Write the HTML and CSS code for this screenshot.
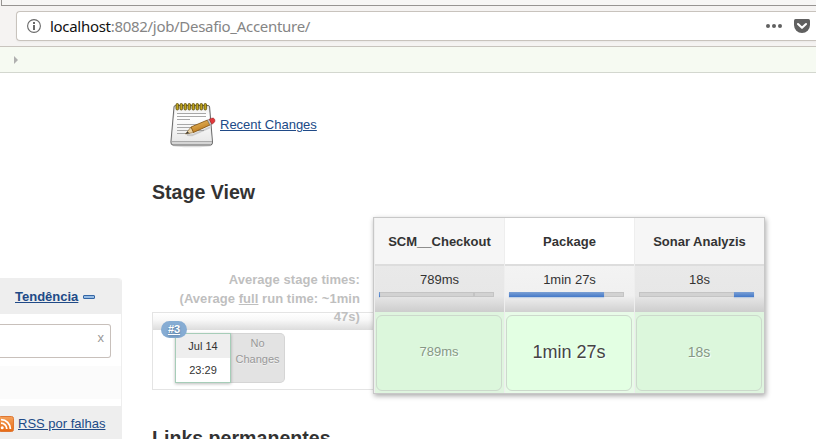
FILE: index.html
```html
<!DOCTYPE html>
<html lang="pt">
<head>
<meta charset="utf-8">
<title>Desafio_Accenture</title>
<link rel="stylesheet" href="styles.css">
</head>
<body>
<header class="toolbar">
  <div class="tab-edge"></div>
  <div class="urlbar">
    <svg class="info" width="14" height="14" viewBox="0 0 14 14"><circle cx="7" cy="7" r="6.4" fill="none" stroke="#686868" stroke-width="1.1"/><path d="M6 3h2v2H6zM6 6h2v5H6z" fill="#686868"/></svg>
    <span class="url"><b>localhost</b>:8082/job/Desafio_Accenture/</span>
    <svg class="dots" width="16" height="4" viewBox="0 0 16 4" fill="#606060"><circle cx="2" cy="2" r="2"/><circle cx="8" cy="2" r="2"/><circle cx="14" cy="2" r="2"/></svg>
    <svg class="pocket" width="16" height="14" viewBox="0 0 16 14"><path d="M1.5 0h13Q16 0 16 1.5V6A8 8 0 0 1 0 6V1.5Q0 0 1.5 0z" fill="#606060"/><path d="M4 5l4 3.8L12 5" fill="none" stroke="#fff" stroke-width="2.1" stroke-linecap="round" stroke-linejoin="round"/></svg>
  </div>
</header>
<nav class="crumbs"><svg width="4" height="8" viewBox="0 0 4 8"><path d="M0 0l4 4-4 4z" fill="#b0b0b0"/></svg></nav>
<div class="page">
  <aside class="history">
    <div class="history-head"><a href="#">Tendência</a><i class="dash"></i></div>
    <div class="find-row"><div class="find">x</div></div>
    <div class="build-row"></div>
    <div class="rss">
      <svg width="16" height="16" viewBox="0 0 16 16"><defs><linearGradient id="rss" x2="0" y2="1"><stop stop-color="#f4a25c"/><stop offset="1" stop-color="#e86a14"/></linearGradient></defs><rect x=".5" y=".5" width="15" height="15" rx="2" fill="url(#rss)" stroke="#df7732"/><circle cx="4.2" cy="11.8" r="1.5" fill="#fff"/><path d="M3 7.2a5.8 5.8 0 0 1 5.8 5.8M3 3.6A9.4 9.4 0 0 1 12.4 13" fill="none" stroke="#fff" stroke-width="1.8"/></svg>
      <a href="#">RSS por falhas</a>
    </div>
  </aside>
  <main>
    <div class="changes">
      <svg width="48" height="48" viewBox="-2 0 48 48">
        <defs>
          <linearGradient id="paper" x2="0" y2="1"><stop stop-color="#eee"/><stop offset=".3" stop-color="#fff"/><stop offset="1" stop-color="#e9e9e9"/></linearGradient>
          <linearGradient id="pencil" x2=".5" y2="1"><stop stop-color="#f3c66b"/><stop offset="1" stop-color="#b87519"/></linearGradient>
        </defs>
        <ellipse cx="22" cy="44.5" rx="20" ry="1.8" fill="#bbb" opacity=".5"/>
        <path d="M4 6Q4 4.500 5.500 4.500H38q1.500 0 1.600 1.500L42.500 41q.2 3-2 3H3q-2.300 0-2.100-3z" fill="#d5d5d5" stroke="#6a6a6a"/>
        <path d="M5 5.500h33.600L41.600 40H1.900z" fill="url(#paper)"/>
        <path d="M2 40.500h40" stroke="#aaa"/>
        <path d="M7 12.500h29M7 15.500h29M7 18.500h13M7 23.500h28M7 26.500h15M7 29.500h27M7 32.500h13" stroke="#a8a8a8"/>
        <g fill="#c0a41c" stroke="#594a0a" stroke-width=".8"><rect x="6" y="2.500" width="2.600" height="6.500" rx="1.300"/><rect x="10" y="2.500" width="2.600" height="6.500" rx="1.300"/><rect x="14" y="2.500" width="2.600" height="6.500" rx="1.300"/><rect x="18" y="2.500" width="2.600" height="6.500" rx="1.300"/><rect x="22" y="2.500" width="2.600" height="6.500" rx="1.300"/><rect x="26" y="2.500" width="2.600" height="6.500" rx="1.300"/><rect x="30" y="2.500" width="2.600" height="6.500" rx="1.300"/><rect x="34" y="2.500" width="2.600" height="6.500" rx="1.300"/></g>
        <path d="M17 34l5 .3 18-8" stroke="#888" stroke-width="2" opacity=".35" fill="none"/>
        <path d="M15.500 33l5.500-7 2 2 .5 3.500z" fill="#ecd2a0" stroke="#7c5a25" stroke-width=".6"/>
        <path d="M15.500 33l2-2.600 1.600 1.700z" fill="#333"/>
        <path d="M21 26l16.500-7 2.500 5-16.500 7.500z" fill="url(#pencil)" stroke="#7b4d0c" stroke-width=".8"/>
        <path d="M37.500 19l1.800-.8 2.500 5L40 24z" fill="#ccc" stroke="#777" stroke-width=".5"/>
        <path d="M39.300 18.200l2.500-1q2-.5 2.900 1.200t-.8 3.400l-2.100 1.400z" fill="#e2383c" stroke="#9c2626" stroke-width=".6"/>
      </svg>
      <a href="#">Recent Changes</a>
    </div>
    <h2 class="stage-title">Stage View</h2>
    <section class="stage-view">
      <div class="runs">
        <div class="averages">Average stage times:<br>(Average <u>full</u> run time: ~1min 47s)</div>
        <div class="run">
          <a class="badge" href="#">#3</a>
          <div class="run-shade"></div>
          <div class="run-body">
            <div class="when"><div class="date">Jul 14</div><div class="time">23:29</div></div>
            <div class="no-changes">No<br>Changes</div>
          </div>
        </div>
      </div>
      <div class="stages">
        <div class="stage">
          <div class="name">SCM__Checkout</div>
          <div class="avg">789ms<div class="bar"><i class="fill-first"></i><i class="tick"></i></div></div>
          <div class="cell"><div class="result">789ms</div></div>
        </div>
        <div class="stage active">
          <div class="name">Package</div>
          <div class="avg">1min 27s<div class="bar"><i class="fill-second"></i></div></div>
          <div class="cell"><div class="result">1min 27s</div></div>
        </div>
        <div class="stage">
          <div class="name">Sonar Analyzis</div>
          <div class="avg">18s<div class="bar"><i class="fill-third"></i></div></div>
          <div class="cell"><div class="result medium">18s</div></div>
        </div>
      </div>
    </section>
    <h2 class="links-title">Links permanentes</h2>
  </main>
</div>
</body>
</html>
```
FILE: styles.css
```css
* { box-sizing: border-box; }
html, body { height: 100%; }
body { margin: 0; overflow: hidden; background: #fff; color: #333; font: 13px/18px "Liberation Sans", Arial, sans-serif; display: flex; flex-direction: column; }
a { color: #204a87; }
h2 { margin: 0; font-size: 19.6px; line-height: 24px; color: #333; }

.toolbar { height: 47px; flex: none; background: #f5f3f2; border-bottom: 1px solid #c8c4be; }
.tab-edge { height: 6px; margin-left: 1px; border: solid #979492; border-width: 0 0 1px 1px; background: #f7f6f5; }
.urlbar { display: flex; align-items: center; height: 30px; margin: 5px 0 0 16px; padding: 0 6px 0 10px; background: #fff; border: 1px solid #c8c3bd; border-right: 0; border-radius: 4px 0 0 4px; box-shadow: 0 1px 2px #0000000c; }
.info { margin-right: 9px; }
.url { flex: 1; color: #858585; font: 15px/28px "Noto Sans", sans-serif; letter-spacing: -.3px; white-space: nowrap; }
.url b { font-weight: 400; color: #111; }
.dots { margin-right: 12px; }

.crumbs { display: flex; align-items: center; height: 26px; flex: none; padding: 1px 0 0 14px; background: #f6faf2; border-bottom: 1px solid #d3d7cf; }
.page { display: flex; flex: 1; min-height: 0; }

.history { width: 122px; flex: none; margin: 205px 30px 0 0; border-right: 1px solid #eee; border-radius: 0 4px 0 0; height: 161px; }
.history-head { display: flex; align-items: center; height: 36px; padding: 1px 0 0 15px; background: #eee; border-radius: 0 4px 0 0; font-weight: bold; }
.dash { width: 12px; height: 4px; margin: 1px 0 0 5px; border: 1px solid #3465a4; border-radius: 1px; background: #96bce4; }
.find-row { height: 52px; padding: 10px 10px 8px 0; }
.find { height: 34px; padding: 4px 6px; border: 1px solid #c8c0bb; border-left: 0; border-radius: 0 3px 3px 0; text-align: right; color: #999; font-size: 13px; }
.build-row { height: 33px; background: #fbfbfb; margin-bottom: 7px; }
.rss { display: flex; align-items: center; gap: 4px; height: 33px; padding-top: 3px; margin-left: -2px; background: #eee; white-space: nowrap; }

main { flex: 1; }
.changes { display: flex; align-items: center; gap: 4px; padding-left: 16px; margin-top: 28px; height: 48px; }
.stage-title { margin-top: 31px; }
.stage-view { display: flex; margin-top: 13px; height: 177px; }
.runs { width: 221px; height: 173px; display: flex; flex-direction: column; }
.averages { height: 95px; padding: 54px 13px 0 15px; text-align: right; font-weight: bold; line-height: 18.5px; letter-spacing: .05px; color: #bfbfbf; overflow: visible; position: relative; z-index: 1; }
.run { position: relative; height: 78px; border: 1px solid #e4e4e4; border-right: 0; }
.run-shade { height: 17px; background: linear-gradient(#fff, #f8f8f8 40%, #dcdcdc); }
.badge { position: absolute; z-index: 2; left: 8px; top: 8px; width: 26px; height: 17px; border-radius: 9px; background: #86acd3; color: #fff; font: bold 11px/17px "Liberation Sans", sans-serif; text-align: center; text-shadow: 0 1px 2px #24476e99; }
.run-body { display: flex; margin: 3px 0 0 22px; height: 50px; font-size: 11px; text-align: center; }
.when { position: relative; width: 56px; border: 1px solid #a6cdb8; box-shadow: 0 1px 3px #0004; background: #fff; color: #333; }
.date { height: 24px; line-height: 25px; background: #eee; }
.time { line-height: 25px; }
.no-changes { width: 54px; border: 1px solid #d5d5d5; border-left: 0; border-radius: 0 5px 5px 0; background: #e3e3e3; color: #999; line-height: 16px; padding-top: 1px; text-shadow: 0 1px 0 #fff8; }

.stages { position: relative; z-index: 2; display: flex; width: 392px; height: 177px; border: 1px solid #c8c8c8; box-shadow: 1px 2px 5px #0005; background: #f7f7f7; }
.stage { width: 130px; text-align: center; border-left: 1px solid #eee; }
.name { height: 46px; line-height: 47px; background: #f6f6f6; font-weight: bold; }
.avg { height: 48px; padding-top: 5px; border-top: 2px solid #ddd; background: linear-gradient(#e9e9e9, #e7e7e7 65%, #cdcdcd); }
.bar { position: relative; width: 115px; height: 5px; margin: 3px 0 0 4px; background: #d2d2d2; box-shadow: inset 0 0 0 1px #c4c4c4; }
.bar i { position: absolute; top: 0; bottom: 0; background: linear-gradient(#7ba0d4, #4479c9); box-shadow: 0 1px 1px #6b9bd555; }
.fill-first { left: 0; width: 1px; }
.fill-second { left: 0; width: 95px; }
.fill-third { right: 0; width: 20px; }
.bar .tick { left: 94px; width: 2px; background: #c3c3c3; box-shadow: none; }
.cell { height: 81px; padding: 3px 2px 2px 1px; background: #dff5df; }
.result { height: 76px; border: 1px solid #ccd9cc; border-radius: 6px; background: #dcf7dc; color: #869886; line-height: 72px; text-shadow: 1px 1px 1px #fff; }
.medium { font-size: 14px; line-height: 73px; }
.active .name { background: #fff; }
.active .avg { background: linear-gradient(#f3f3f3, #f0f0f0 65%, #d0d0d0); }
.active .cell { background: #e8fbe8; }
.active .result { background: #e3ffe3; color: #444; font-size: 18px; }

.links-title { margin-top: 32px; }
```
